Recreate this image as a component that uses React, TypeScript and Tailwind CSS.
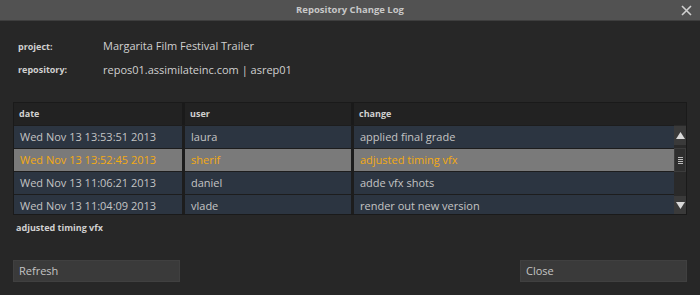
import React from "react";

// Repository Change Log dialog

type Entry = { date: string; user: string; change: string };

const entries: Entry[] = [
  { date: "Wed Nov 13 13:53:51 2013", user: "laura", change: "applied final grade" },
  { date: "Wed Nov 13 13:52:45 2013", user: "sherif", change: "adjusted timing vfx" },
  { date: "Wed Nov 13 11:06:21 2013", user: "daniel", change: "adde vfx shots" },
  { date: "Wed Nov 13 11:04:09 2013", user: "vlade", change: "render out new version" },
];

const selected = 1;

function Scrollbar() {
  return (
    <div className="flex w-[12px] flex-col bg-[#2a2a2a] pt-[1px]">
      <div className="flex h-[19px] shrink-0 items-center justify-center bg-[#3a3a3a]">
        <svg width="9" height="7" viewBox="0 0 9 7">
          <path d="M4.5 0 L9 7 L0 7 Z" fill="#d8d8d8" />
        </svg>
      </div>
      <div className="mt-[3px] flex h-[24px] shrink-0 items-center justify-center border border-[#3c3c3c] bg-[#2e2e2e]">
        <div className="flex flex-col gap-[1px]">
          <div className="h-[1px] w-[5px] bg-[#bdbdbd]" />
          <div className="h-[1px] w-[5px] bg-[#bdbdbd]" />
          <div className="h-[1px] w-[5px] bg-[#bdbdbd]" />
          <div className="h-[1px] w-[5px] bg-[#bdbdbd]" />
        </div>
      </div>
      <div className="flex-1" />
      <div className="flex h-[18px] shrink-0 items-center justify-center bg-[#3a3a3a]">
        <svg width="9" height="7" viewBox="0 0 9 7">
          <path d="M0 0 L9 0 L4.5 7 Z" fill="#d8d8d8" />
        </svg>
      </div>
    </div>
  );
}

export default function App() {
  return (
    <div className="flex h-[295px] w-[700px] flex-col bg-[#272727] font-['Open_Sans',sans-serif] text-[#c4c4c4]">
      {/* ── Title bar ── */}
      <div className="relative flex h-[21px] items-center justify-center border-b border-[#3e3e3e] bg-[#525252]">
        <span className="text-[9.5px] font-bold text-[#c8c8c8]">Repository Change Log</span>
        <svg className="absolute right-[8px] top-[5px]" width="11" height="11" viewBox="0 0 11 11">
          <path d="M1 1 L10 10 M10 1 L1 10" stroke="#d0d0d0" strokeWidth="1.6" />
        </svg>
      </div>

      {/* ── Project info ── */}
      <div className="flex flex-col gap-[7px] pl-[18px] pt-[17px]">
        <div className="flex items-center">
          <span className="w-[85px] text-[9px] font-bold text-[#d0d0d0]">project:</span>
          <span className="text-[11px] text-[#d0d0d0]">Margarita Film Festival Trailer</span>
        </div>
        <div className="flex items-center">
          <span className="w-[85px] text-[9px] font-bold text-[#d0d0d0]">repository:</span>
          <span className="text-[11px] text-[#d0d0d0]">repos01.assimilateinc.com | asrep01</span>
        </div>
      </div>

      {/* ── Table ── */}
      <div className="mx-[13px] mt-[24px] flex w-[674px] flex-col border border-[#1a1a1a] bg-[#1d1d1d]">
        <div className="flex h-[22px] text-[9px] font-bold text-[#d0d0d0]">
          <div className="flex w-[168px] items-center bg-[#222222] pl-[5px]">date</div>
          <div className="w-[3px] bg-[#1a1a1a]" />
          <div className="flex w-[166px] items-center bg-[#222222] pl-[5px]">user</div>
          <div className="w-[3px] bg-[#1a1a1a]" />
          <div className="flex flex-1 items-center bg-[#222222] pl-[5px]">change</div>
        </div>
        <div className="flex h-[89px] overflow-hidden">
          <div className="flex flex-1 flex-col gap-[1px] pt-[1px]">
            {entries.map((e, i) => {
              const sel = i === selected;
              const cell = sel
                ? "flex items-center bg-[#7a7a7a] pl-[6px] text-[#f4aa12]"
                : "flex items-center bg-[#2c3541] pl-[6px] text-[#c4c4c4]";
              return (
                <div key={e.date} className="flex h-[22px] shrink-0 gap-[3px] text-[11px]">
                  <div className={`${cell} w-[168px]`}>{e.date}</div>
                  <div className={`${cell} w-[166px]`}>{e.user}</div>
                  <div className={`${cell} flex-1`}>{e.change}</div>
                </div>
              );
            })}
          </div>
          <Scrollbar />
        </div>
      </div>

      {/* ── Selected change ── */}
      <div className="pl-[16px] pt-[6px] text-[9px] font-bold text-[#d0d0d0]">adjusted timing vfx</div>

      {/* ── Buttons ── */}
      <div className="mt-auto mb-[13px] flex justify-between px-[13px]">
        <button className="flex h-[22px] w-[167px] items-center border border-[#404040] bg-[#3a3a3a] pl-[5px] text-[11px] text-[#c4c4c4]">
          Refresh
        </button>
        <button className="flex h-[22px] w-[167px] items-center border border-[#404040] bg-[#3a3a3a] pl-[5px] text-[11px] text-[#c4c4c4]">
          Close
        </button>
      </div>
    </div>
  );
}
